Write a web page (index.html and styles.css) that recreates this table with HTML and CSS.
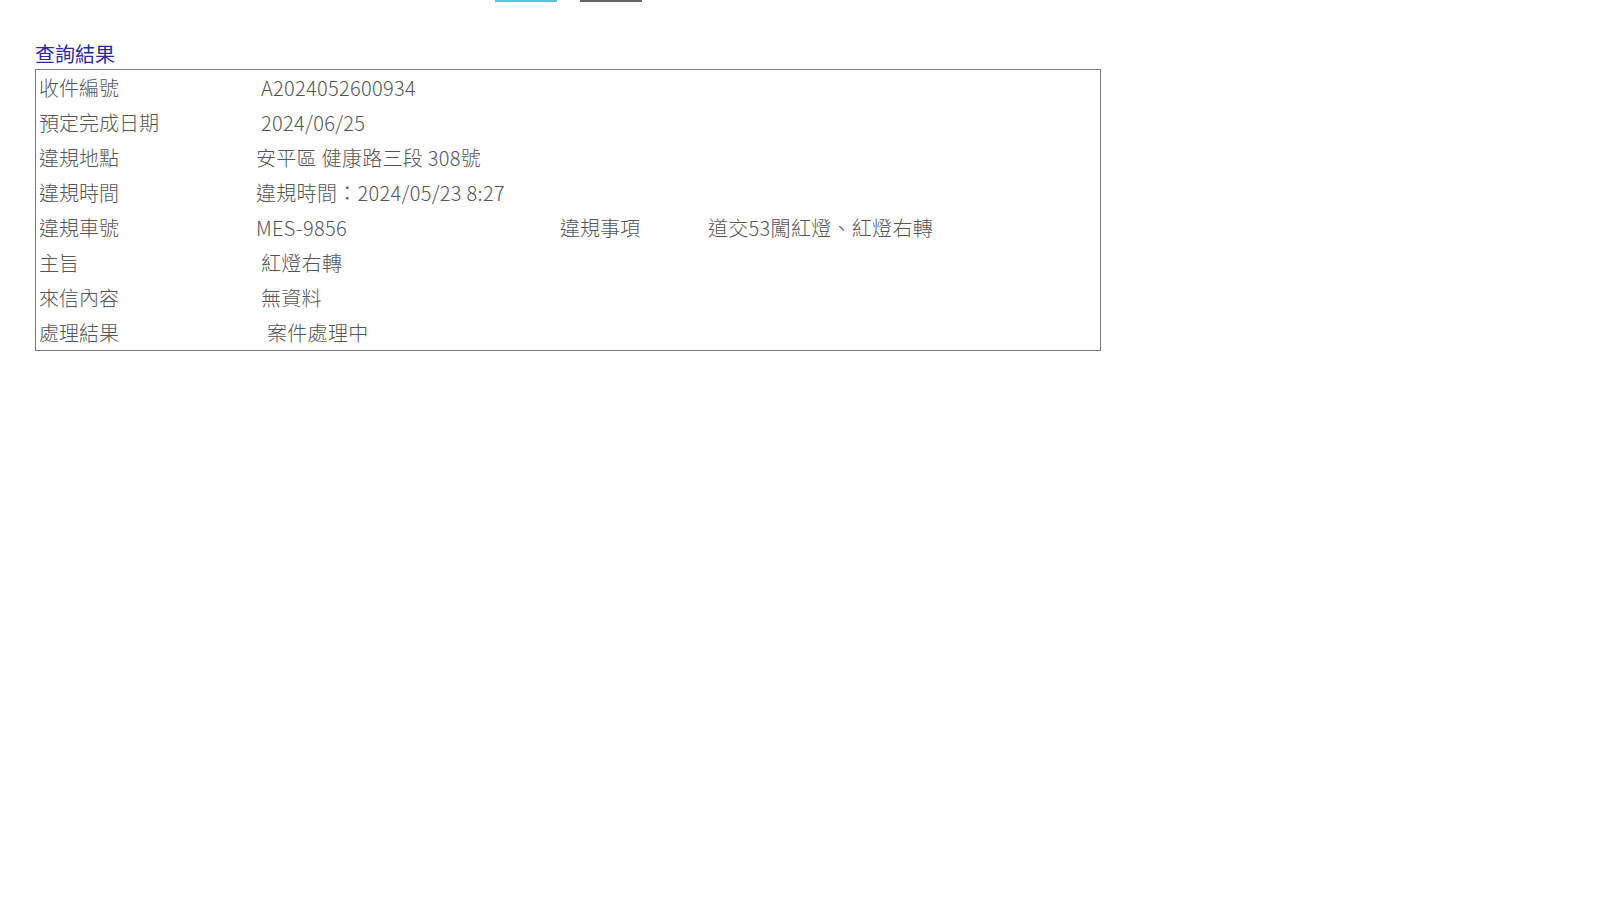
FILE: index.html
```html
<!DOCTYPE html>
<html lang="zh-Hant">
<head>
<meta charset="utf-8">
<title>查詢結果</title>
<link rel="stylesheet" href="styles.css">
</head>
<body>
<div class="topbar">
  <span class="btn btn-info"></span>
  <span class="btn btn-dark"></span>
</div>
<section class="result">
  <h2 class="result-title">查詢結果</h2>
  <div class="result-box">
    <div class="row"><div class="label">收件編號</div><div class="value pad1">A2024052600934</div></div>
    <div class="row"><div class="label">預定完成日期</div><div class="value pad1">2024/06/25</div></div>
    <div class="row"><div class="label">違規地點</div><div class="value">安平區 健康路三段 308號</div></div>
    <div class="row"><div class="label">違規時間</div><div class="value">違規時間：2024/05/23 8:27</div></div>
    <div class="row">
      <div class="label">違規車號</div>
      <div class="value plate">MES-9856</div>
      <div class="sublabel">違規事項</div>
      <div class="value">道交53闖紅燈、紅燈右轉</div>
    </div>
    <div class="row"><div class="label">主旨</div><div class="value pad1">紅燈右轉</div></div>
    <div class="row"><div class="label">來信內容</div><div class="value pad1">無資料</div></div>
    <div class="row"><div class="label">處理結果</div><div class="value pad2">案件處理中</div></div>
  </div>
</section>
</body>
</html>
```

FILE: styles.css
```css
html, body {
  margin: 0;
  padding: 0;
  background: #fff;
}

body {
  font-family: "Noto Sans CJK TC", "Noto Sans", sans-serif;
  color: #555;
}

.topbar {
  display: flex;
  gap: 23px;
  padding-left: 495px;
  height: 2px;
}

.btn {
  display: block;
  width: 62px;
  height: 2px;
}

.btn-info {
  background: #5bc6d8;
}

.btn-dark {
  background: #666;
}

.result {
  padding: 39px 0 0 35px;
}

.result-title {
  margin: 0 0 2px 0;
  font-size: 20px;
  font-weight: 400;
  line-height: 26px;
  color: #2a2a9e;
}

.result-box {
  width: 1064px;
  border: 1px solid #7a7a7a;
}

.row {
  display: flex;
  height: 35px;
  line-height: 35px;
  font-size: 20px;
  font-weight: 300;
  white-space: pre;
}

.label {
  width: 217px;
  padding-left: 3px;
  flex: none;
}

.value {
  flex: none;
  letter-spacing: 0.3px;
}

.pad1 {
  padding-left: 5px;
}

.pad2 {
  padding-left: 11px;
}

.plate {
  width: 304px;
}

.sublabel {
  width: 148px;
  flex: none;
}
```
